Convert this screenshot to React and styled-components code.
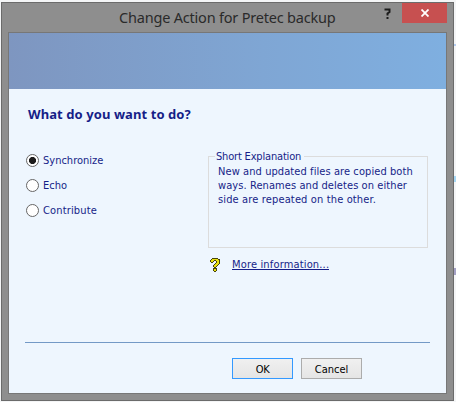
import styled, { createGlobalStyle } from "styled-components"

const GlobalStyle = createGlobalStyle`
    body {
        margin: 0;
        background: #f4f5f6;
        font-family: "DejaVu Sans Condensed", "DejaVu Sans", sans-serif;
        font-size: 11px;
        color: #161e88;
    }
`

const Desktop = styled.div`
    box-sizing: border-box;
    position: relative;
    width: 456px;
    height: 402px;
    padding: 2px 2px 1px 1px;
    overflow: hidden;
`

const Speck = styled.span`
    position: absolute;
    right: 0;
    top: ${(props) => props.$top}px;
    width: 2px;
    height: ${(props) => props.$height}px;
    background: ${(props) => props.$color};
`

const Window = styled.div`
    box-sizing: border-box;
    display: flex;
    flex-direction: column;
    width: 453px;
    height: 399px;
    padding: 0 6px 6px;
    border: 1px solid #6b6b6b;
    background: #8e8e8e;
`

const TitleBar = styled.div`
    display: flex;
    height: 29px;
    flex-shrink: 0;
`

const Title = styled.div`
    flex: 1;
    padding-left: 111px;
    color: #2a2a2a;
    font-family: "Noto Sans", sans-serif;
    font-size: 14.5px;
    line-height: 29px;
    white-space: nowrap;
    letter-spacing: ${(props) => props.$spacing}px;
`

const HelpButton = styled.div`
    width: 20px;
    padding-top: 5px;
    svg { display: block; }
`

const CloseButton = styled.div`
    display: flex;
    align-items: center;
    justify-content: center;
    width: 45px;
    height: 20px;
    background: #c75050;
`

const Client = styled.div`
    box-sizing: border-box;
    flex: 1;
    width: 439px;
    border: 1px solid #777777;
    background: #eef6fe;
`

const Banner = styled.div`
    height: 56px;
    background: linear-gradient(90deg, #7e96c0, #7fa6d4 58%, #7fafe0);
`

const Heading = styled.h1`
    margin: 0;
    padding: 16px 0 0 19px;
    height: 46px;
    box-sizing: border-box;
    font-family: "Noto Sans", sans-serif;
    font-size: 13px;
    line-height: 18px;
    letter-spacing: ${(props) => props.$spacing}px;
`

const Columns = styled.div`
    display: flex;
    height: 207px;
`

const Options = styled.div`
    width: 182px;
    padding: 19px 0 0 17px;
`

const Option = styled.div`
    display: flex;
    align-items: center;
    gap: 4px;
    height: 13px;
    margin-bottom: 12px;
`

const Radio = styled.span`
    box-sizing: border-box;
    width: 13px;
    height: 13px;
    border: 1px solid #666666;
    border-radius: 50%;
    background: ${(props) => (props.$checked ? "radial-gradient(circle, #1c1c1c 3.2px, #ffffff 3.9px)" : "#ffffff")};
`

const Text = styled.span`
    display: block;
    white-space: nowrap;
    line-height: 14px;
    letter-spacing: ${(props) => props.$spacing || 0}px;
`

const Explanation = styled.fieldset`
    box-sizing: border-box;
    width: 220px;
    height: 98px;
    margin: 15px 0 0;
    padding: 2px 0 0 9px;
    border: 1px solid #dcdcdc;
`

const Legend = styled.legend`
    margin-left: -3px;
    padding: 0 3px 0 1px;
    height: 13px;
`

const MoreInfo = styled.div`
    display: flex;
    padding: 10px 0 0 2px;
`

const Link = styled.a`
    margin-left: 11px;
    border-bottom: 1px solid #161e88;
    height: 11px;
`

const Divider = styled.div`
    height: 1px;
    width: 405px;
    margin-left: 16px;
    background: #7399c6;
`

const Buttons = styled.div`
    display: flex;
    gap: 8px;
    padding: 15px 0 0 223px;
`

const Button = styled.button`
    width: 61px;
    height: 21px;
    padding: 2px 0 0;
    border: 1px solid ${(props) => (props.$primary ? "#3399ff" : "#acacac")};
    background: linear-gradient(#f0f0f0, #e5e5e5);
    color: #000000;
    font: inherit;
    line-height: 17px;
    letter-spacing: ${(props) => props.$spacing || 0}px;
`

const iconRows = [
    "..kkkkkk...",
    ".kyyyyyykk.",
    "kyyykkyyyk.",
    "kyyk..kyyk.",
    ".kk...kyyk.",
    ".....kyyyk.",
    "....kyyyk..",
    "...kyyyk...",
    "...kyyk....",
    "....kk.....",
    "...kkkk....",
    "...kyyk....",
    "...kyyk....",
    "....kk.....",
]

function HelpIcon() {
    return (
        <svg width="11" height="14" shapeRendering="crispEdges">
            {iconRows.map((row, y) =>
                row.split("").map((c, x) =>
                    c === "." ? null : (
                        <rect key={x + "-" + y} x={x} y={y} width="1" height="1" fill={c === "k" ? "#45430f" : "#e8e010"} />
                    )
                )
            )}
        </svg>
    )
}

export default function App() {
    return (
        <>
        <GlobalStyle />
        <Desktop>
            <Window>
                <TitleBar>
                    <Title $spacing={-0.2}>Change Action for Pretec backup</Title>
                    <HelpButton>
                        <svg width="12" height="12" viewBox="0 0 12 12" fill="none" stroke="#1c1c1c" strokeWidth="2">
                            <path d="M3.5 2.5V1.5H7.5V4L5.5 5.5V7.5" />
                            <path d="M5.5 9V11" />
                        </svg>
                    </HelpButton>
                    <CloseButton>
                        <svg width="8" height="8" viewBox="0 0 8 8" stroke="#ffffff" strokeWidth="1.8">
                            <path d="M.5.5L7.5 7.5M7.5.5L.5 7.5" />
                        </svg>
                    </CloseButton>
                </TitleBar>
                <Client>
                    <Banner />
                    <Heading $spacing={0.08}>What do you want to do?</Heading>
                    <Columns>
                        <Options>
                            <Option><Radio $checked /><Text>Synchronize</Text></Option>
                            <Option><Radio /><Text>Echo</Text></Option>
                            <Option><Radio /><Text $spacing={0.15}>Contribute</Text></Option>
                        </Options>
                        <div>
                            <Explanation>
                                <Legend><Text $spacing={-0.18}>Short Explanation</Text></Legend>
                                <Text $spacing={0.08}>New and updated files are copied both</Text>
                                <Text $spacing={0.08}>ways. Renames and deletes on either</Text>
                                <Text $spacing={0.14}>side are repeated on the other.</Text>
                            </Explanation>
                            <MoreInfo>
                                <HelpIcon />
                                <Link><Text $spacing={0.16}>More information...</Text></Link>
                            </MoreInfo>
                        </div>
                    </Columns>
                    <Divider />
                    <Buttons>
                        <Button $primary $spacing={-0.3}>OK</Button>
                        <Button>Cancel</Button>
                    </Buttons>
                </Client>
            </Window>
            <Speck $top={44} $height={2} $color="#b5cdf0" />
            <Speck $top={176} $height={6} $color="#a6d8f5" />
            <Speck $top={268} $height={7} $color="#a3a0c4" />
        </Desktop>
        </>
    )
}
